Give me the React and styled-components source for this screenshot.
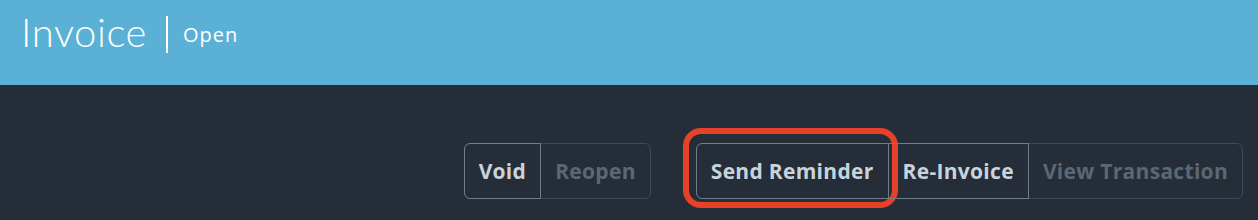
import React from 'react'
import styled, { createGlobalStyle } from 'styled-components'

const GlobalStyle = createGlobalStyle`
  html, body {
    margin: 0;
    padding: 0;
    background: #252e38;
    font-family: "Open Sans", Lato, sans-serif;
  }
`

const actions = [
  [
    { label: 'Void', enabled: true },
    { label: 'Reopen', enabled: false },
  ],
  [
    { label: 'Send Reminder', enabled: true, highlighted: true },
    { label: 'Re-Invoice', enabled: true },
    { label: 'View Transaction', enabled: false },
  ],
]

export default function App() {
  return (
    <Page>
      <GlobalStyle />
      <Header>
        <Title>Invoice</Title>
        <Divider />
        <Status>Open</Status>
      </Header>
      <Toolbar>
        {actions.map((group, i) => (
          <Group key={i}>
            {group.map((a) => (
              <Button key={a.label} $enabled={a.enabled}>
                {a.label}
                {a.highlighted && <Highlight />}
              </Button>
            ))}
          </Group>
        ))}
      </Toolbar>
    </Page>
  )
}

const Page = styled.div`
  width: 1258px;
  height: 220px;
  background: #252e38;
  overflow: hidden;
`

const Header = styled.div`
  height: 85px;
  background: #5ab0d5;
  display: flex;
  align-items: flex-start;
  padding-left: 21px;
  box-sizing: border-box;
  color: #ffffff;
`

const Title = styled.h1`
  margin: 6px 0 0;
  font-family: Lato, sans-serif;
  font-size: 40px;
  font-weight: 300;
  line-height: 52px;
  letter-spacing: 0.6px;
`

const Divider = styled.span`
  width: 2px;
  height: 37px;
  background: #ffffff;
  margin: 16px 15px 0 19px;
`

const Status = styled.span`
  margin-top: 22px;
  font-size: 20px;
  font-weight: 400;
  line-height: 26px;
  letter-spacing: 1px;
`

const Toolbar = styled.div`
  display: flex;
  justify-content: flex-end;
  gap: 45px;
  padding: 58px 15px 0 0;
`

const Group = styled.div`
  display: flex;
  & > button:first-child {
    border-radius: 6px 0 0 6px;
  }
  & > button:last-child {
    border-radius: 0 6px 6px 0;
  }
  & > button + button {
    margin-left: -1px;
  }
`

const Button = styled.button`
  position: relative;
  height: 56px;
  padding: 0 14px;
  background: transparent;
  border: 1px solid ${(p) => (p.$enabled ? '#717e89' : '#3f4953')};
  z-index: ${(p) => (p.$enabled ? 1 : 0)};
  color: ${(p) => (p.$enabled ? '#c8d3db' : '#5c6772')};
  font-family: "Open Sans", Lato, sans-serif;
  font-size: 21px;
  font-weight: 700;
  letter-spacing: 0.3px;
  white-space: nowrap;
  cursor: ${(p) => (p.$enabled ? 'pointer' : 'default')};
`

const Highlight = styled.span`
  position: absolute;
  left: -14px;
  right: -10px;
  top: -16px;
  bottom: -10px;
  border: 6px solid #e8412a;
  border-radius: 18px;
  pointer-events: none;
`
